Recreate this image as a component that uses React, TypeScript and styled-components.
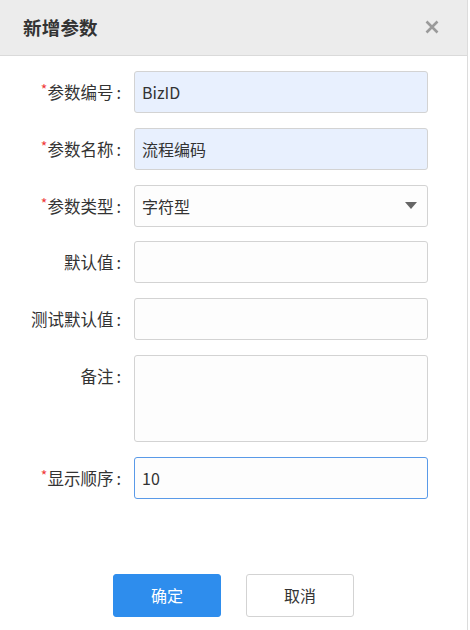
import React from "react";
import styled, { createGlobalStyle } from "styled-components";

const Global = createGlobalStyle`
  html, body { margin: 0; padding: 0; background: #fff; }
  body { font-family: "Noto Sans CJK SC", "Noto Sans", sans-serif; color: #333; }
  * { box-sizing: border-box; }
`;

const Dialog = styled.div`
  width: 468px;
  height: 630px;
  border-right: 1px solid #dcdcdc;
  background: #fff;
  display: flex;
  flex-direction: column;
`;

const Header = styled.div`
  height: 56px;
  flex: none;
  background: #ececec;
  border-bottom: 1px solid #dadada;
  display: flex;
  align-items: center;
  justify-content: space-between;
  padding: 0 28px 2px 23px;
`;

const Title = styled.h1`
  margin: 0;
  font-size: 18.5px;
  font-weight: 700;
  color: #333;
  letter-spacing: 0.2px;
`;

const Close = styled.button`
  border: 0;
  background: transparent;
  padding: 0;
  width: 14px;
  height: 14px;
  display: flex;
  cursor: pointer;
`;

const Form = styled.form`
  display: flex;
  flex-direction: column;
  gap: 14.75px;
  padding-top: 15px;
`;

const Row = styled.div`
  display: grid;
  grid-template-columns: 121px 294px;
  column-gap: 13px;
  align-items: start;
`;

const Label = styled.label`
  height: 42px;
  display: flex;
  align-items: center;
  justify-content: flex-end;
  font-size: 16.5px;
  color: #333;
  white-space: nowrap;
`;

const Star = styled.span`
  color: #f03b3b;
  font-size: 14px;
  line-height: 1;
  align-self: center;
  margin-bottom: 6px;
`;

const Colon = styled.span`
  margin-left: 3px;
`;

const fieldBase = `
  width: 294px;
  border: 1px solid #d3d3d3;
  border-radius: 3px;
  font-family: "Noto Sans CJK SC", "Noto Sans", sans-serif;
  font-size: 16px;
  color: #333;
  padding: 0 7px;
  outline: none;
`;

const Input = styled.input<{ $filled?: boolean; $focus?: boolean }>`
  ${fieldBase}
  height: 42px;
  background: ${(p) => (p.$filled ? "#e8f0fe" : "#fdfdfd")};
  border-color: ${(p) => (p.$focus ? "#5a9ae8" : "#d3d3d3")};
`;

const SelectBox = styled.div`
  ${fieldBase}
  height: 42px;
  background: #fdfdfd;
  display: flex;
  align-items: center;
  justify-content: space-between;
  padding-right: 10px;
`;

const Arrow = styled.span`
  width: 0;
  height: 0;
  border-left: 6px solid transparent;
  border-right: 6px solid transparent;
  border-top: 7px solid #666;
`;

const TextArea = styled.textarea`
  ${fieldBase}
  height: 87px;
  background: #fdfdfd;
  resize: none;
  display: block;
`;

const Footer = styled.div`
  display: flex;
  justify-content: center;
  gap: 25px;
  margin-top: 75px;
`;

const Btn = styled.button<{ $primary?: boolean }>`
  width: 108px;
  height: 43px;
  border-radius: 3px;
  font-family: "Noto Sans CJK SC", "Noto Sans", sans-serif;
  font-size: 16px;
  cursor: pointer;
  border: 1px solid ${(p) => (p.$primary ? "#2e8ded" : "#d3d3d3")};
  background: ${(p) => (p.$primary ? "#2e8ded" : "#fff")};
  color: ${(p) => (p.$primary ? "#fff" : "#333")};
`;

function FieldLabel({ text, required }: { text: string; required?: boolean }) {
  return (
    <Label>
      {required && <Star>*</Star>}
      {text}
      <Colon>:</Colon>
    </Label>
  );
}

export default function App() {
  return (
    <>
      <Global />
      <Dialog>
        <Header>
          <Title>新增参数</Title>
          <Close aria-label="close">
            <svg width="14" height="14" viewBox="0 0 14 14">
              <path d="M1.5 1.5 L12.5 12.5 M12.5 1.5 L1.5 12.5" stroke="#9a9a9a" strokeWidth="2.6" />
            </svg>
          </Close>
        </Header>
        <Form onSubmit={(e) => e.preventDefault()}>
          <Row>
            <FieldLabel required text="参数编号" />
            <Input $filled defaultValue="BizID" />
          </Row>
          <Row>
            <FieldLabel required text="参数名称" />
            <Input $filled defaultValue="流程编码" />
          </Row>
          <Row>
            <FieldLabel required text="参数类型" />
            <SelectBox>
              <span>字符型</span>
              <Arrow />
            </SelectBox>
          </Row>
          <Row>
            <FieldLabel text="默认值" />
            <Input />
          </Row>
          <Row>
            <FieldLabel text="测试默认值" />
            <Input />
          </Row>
          <Row>
            <FieldLabel text="备注" />
            <TextArea />
          </Row>
          <Row>
            <FieldLabel required text="显示顺序" />
            <Input $focus defaultValue="10" />
          </Row>
        </Form>
        <Footer>
          <Btn $primary>确定</Btn>
          <Btn>取消</Btn>
        </Footer>
      </Dialog>
    </>
  );
}
